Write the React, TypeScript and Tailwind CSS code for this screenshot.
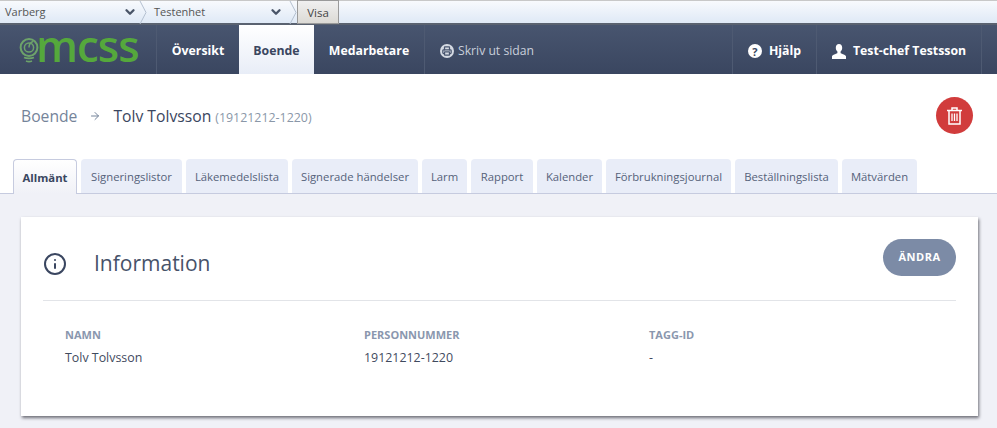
import { ChevronDown, ArrowRight, Info, Printer } from 'lucide-react';

const font = { fontFamily: '"Open Sans", "Noto Sans", sans-serif' };

const tabs = ['Signeringslistor', 'Läkemedelslista', 'Signerade händelser', 'Larm', 'Rapport', 'Kalender', 'Förbrukningsjournal', 'Beställningslista', 'Mätvärden'];
const tabWidths = ['w-[101px]', 'w-[102px]', 'w-[126px]', 'w-[45px]', 'w-[62px]', 'w-[65px]', 'w-[125px]', 'w-[103px]', 'w-[75px]'];

function Crumb() {
  return (
    <svg width="8" height="23" viewBox="0 0 8 23" fill="none" className="shrink-0">
      <path d="M1 0l6 11.5L1 23" stroke="#b4c0d0" strokeWidth="1" />
    </svg>
  );
}

function FilterBar() {
  return (
    <div className="flex h-[25px] items-stretch border-t border-b-2 border-t-[#c8c8c8] border-b-[#5a6270] bg-gradient-to-b from-[#f8fafd] to-[#dfe9f6] text-[11px] text-[#555]" style={{ fontFamily: '"Open Sans", sans-serif' }}>
      <div className="flex w-[139px] items-center justify-between pl-[5px] pr-[2px]">
        <span>Varberg</span>
        <ChevronDown size={14} strokeWidth={4} className="text-[#4a5568]" />
      </div>
      <Crumb />
      <div className="flex w-[142px] items-center justify-between pl-[7px] pr-[6px]">
        <span>Testenhet</span>
        <ChevronDown size={14} strokeWidth={4} className="text-[#4a5568]" />
      </div>
      <Crumb />
      <div className="-mt-px h-[24px] w-[42px] border border-[#9a9a9a] bg-gradient-to-b from-[#f0f0f0] to-[#dcdad5] text-center text-[11.5px] leading-[24px] text-[#444]">Visa</div>
    </div>
  );
}

function Logo() {
  return (
    <div className="flex w-[156px] items-center pl-[19px]">
      <svg width="20" height="27" viewBox="0 0 20 27" fill="none" className="mt-[1px] shrink-0 text-[#6da36a]">
        <circle cx="10" cy="10.5" r="8.4" stroke="currentColor" strokeWidth="2" />
        <circle cx="10" cy="10.5" r="4.6" stroke="currentColor" strokeWidth="1.5" />
        <path d="M10 10.5c0-3 1.500-5 4-6" stroke="currentColor" strokeWidth="1.5" />
        <path d="M5 20.5c2.500 1.200 7.500 1.200 10 0M7 24c2 .8 4 .8 6 0" stroke="currentColor" strokeWidth="1.6" />
      </svg>
      <span className="-mt-[9px] -ml-[3px] text-[44px] leading-none font-semibold tracking-[-1px] text-[#55a83c]">mcss</span>
    </div>
  );
}

function NavBar() {
  return (
    <div className="flex h-[49px] bg-gradient-to-b from-[#48556f] to-[#3a4660] text-[12.3px] font-bold text-white">
      <Logo />
      <div className="flex w-[83px] items-center justify-center border-l border-[#4e5a72] pt-[3px]">Översikt</div>
      <div className="flex w-[75px] items-center justify-center bg-gradient-to-b from-white to-[#e8edf7] pt-[3px] text-[#3a4660]">Boende</div>
      <div className="flex w-[110px] items-center justify-center pt-[3px]">Medarbetare</div>
      <div className="flex items-center gap-[4px] border-l border-[#4e5a72] pt-[3px] pl-[15px] text-[12.2px] font-normal text-[#c9cfdb]">
        <span className="flex h-[14px] w-[14px] items-center justify-center rounded-full bg-[#d5dae3]">
          <Printer size={10} strokeWidth={3} className="text-[#48556f]" />
        </span>
        Skriv ut sidan
      </div>
      <div className="ml-auto flex">
        <div className="flex w-[84px] items-center justify-center gap-[7px] border-l border-[#4e5a72] pt-[3px]">
          <span className="flex h-[14px] w-[14px] items-center justify-center rounded-full bg-white text-[11px] leading-none text-[#3a4660]">?</span>
          Hjälp
        </div>
        <div className="mr-[15px] flex w-[166px] items-center justify-center gap-[7px] border-x border-[#4e5a72] pt-[3px]">
          <svg width="14" height="15" viewBox="0 0 14 15" fill="white" className="shrink-0">
            <path d="M7 0c2 0 3.200 1.600 3.200 3.800 0 1.600-.7 3-1.600 3.800v1.500c0 .6 4.400 1.400 5.400 3.100V15H0v-2.800c1-1.700 5.400-2.500 5.400-3.100V7.600C4.500 6.800 3.800 5.400 3.800 3.800 3.800 1.600 5 0 7 0z" />
          </svg>
          Test-chef Testsson
        </div>
      </div>
    </div>
  );
}

function Heading() {
  return (
    <div className="flex h-[85px] items-center justify-between pl-[21px] pr-[24px]">
      <div className="flex items-baseline">
        <span className="text-[15.7px] text-[#75849a]">Boende</span>
        <ArrowRight size={12} className="ml-[12px] mr-[12px] self-center text-[#75849a]" />
        <span className="text-[15.7px] text-[#3a4660]">Tolv Tolvsson</span>
        <span className="ml-[4px] text-[12.4px] text-[#8a97a8]">(19121212-1220)</span>
      </div>
      <div className="-mt-[2px] flex h-[37px] w-[37px] items-center justify-center rounded-full bg-[#d13c3c]">
        <svg width="15" height="18" viewBox="0 0 15 18" fill="none" stroke="white">
          <path d="M0 3.500h15M5 3.500V1h5v2.500" strokeWidth="1.500" />
          <path d="M2 3.500V17h11V3.500" strokeWidth="1.500" />
          <path d="M5 6.500v7.500M7.500 6.500v7.500M10 6.500v7.500" strokeWidth="1.300" />
        </svg>
      </div>
    </div>
  );
}

function Tabs() {
  return (
    <div className="flex h-[35px] gap-[4px] border-b border-[#c6cbdf] pl-[13px] text-[11.3px] text-[#55627a]">
      <div className="relative z-10 flex h-[35px] w-[64px] items-center justify-center rounded-t-[4px] border border-b-0 border-[#c6cbdf] bg-gradient-to-b from-white to-[#f0f1f7] pt-[2px] font-bold text-[#3a4660]">Allmänt</div>
      {tabs.map((t, i) => (
        <div key={t} className={`flex h-[34px] items-center justify-center rounded-t-[4px] bg-[#e9edf8] pt-[2px] ${tabWidths[i]}`}>{t}</div>
      ))}
    </div>
  );
}

function Field({ label, value, className }: { label: string; value: string; className: string }) {
  return (
    <div className={className}>
      <div className="text-[11px] leading-[15px] font-bold text-[#8a97ae]">{label}</div>
      <div className="mt-[7px] text-[12.4px] leading-[17px] text-[#3f4a5e]">{value}</div>
    </div>
  );
}

function InfoCard() {
  return (
    <div className="mx-[21px] mt-[22px] h-[199px] w-[957px] bg-white px-[22px] shadow-[1px_2px_3px_rgba(40,40,50,0.65)]">
      <div className="relative flex h-[84px] items-center border-b border-[#e2e4e8] pt-[10px]">
        <Info size={24} strokeWidth={2} className="text-[#3a4660]" />
        <span className="ml-[27px] text-[21px] text-[#475269]">Information</span>
        <div className="absolute top-[22px] right-0 flex h-[37px] w-[73px] items-center justify-center rounded-full bg-[#7c8ba6] text-[11px] font-bold tracking-[0.5px] text-white">ÄNDRA</div>
      </div>
      <div className="flex pt-[26px] pl-[22px]">
        <Field label="NAMN" value="Tolv Tolvsson" className="w-[299px]" />
        <Field label="PERSONNUMMER" value="19121212-1220" className="w-[285px]" />
        <Field label="TAGG-ID" value="-" className="" />
      </div>
    </div>
  );
}

export default function App() {
  return (
    <div className="h-[428px] w-[997px] overflow-hidden bg-white" style={font}>
      <FilterBar />
      <NavBar />
      <Heading />
      <Tabs />
      <div className="h-[234px] overflow-hidden bg-[#f0f1f7] pt-px">
        <InfoCard />
      </div>
    </div>
  );
}
